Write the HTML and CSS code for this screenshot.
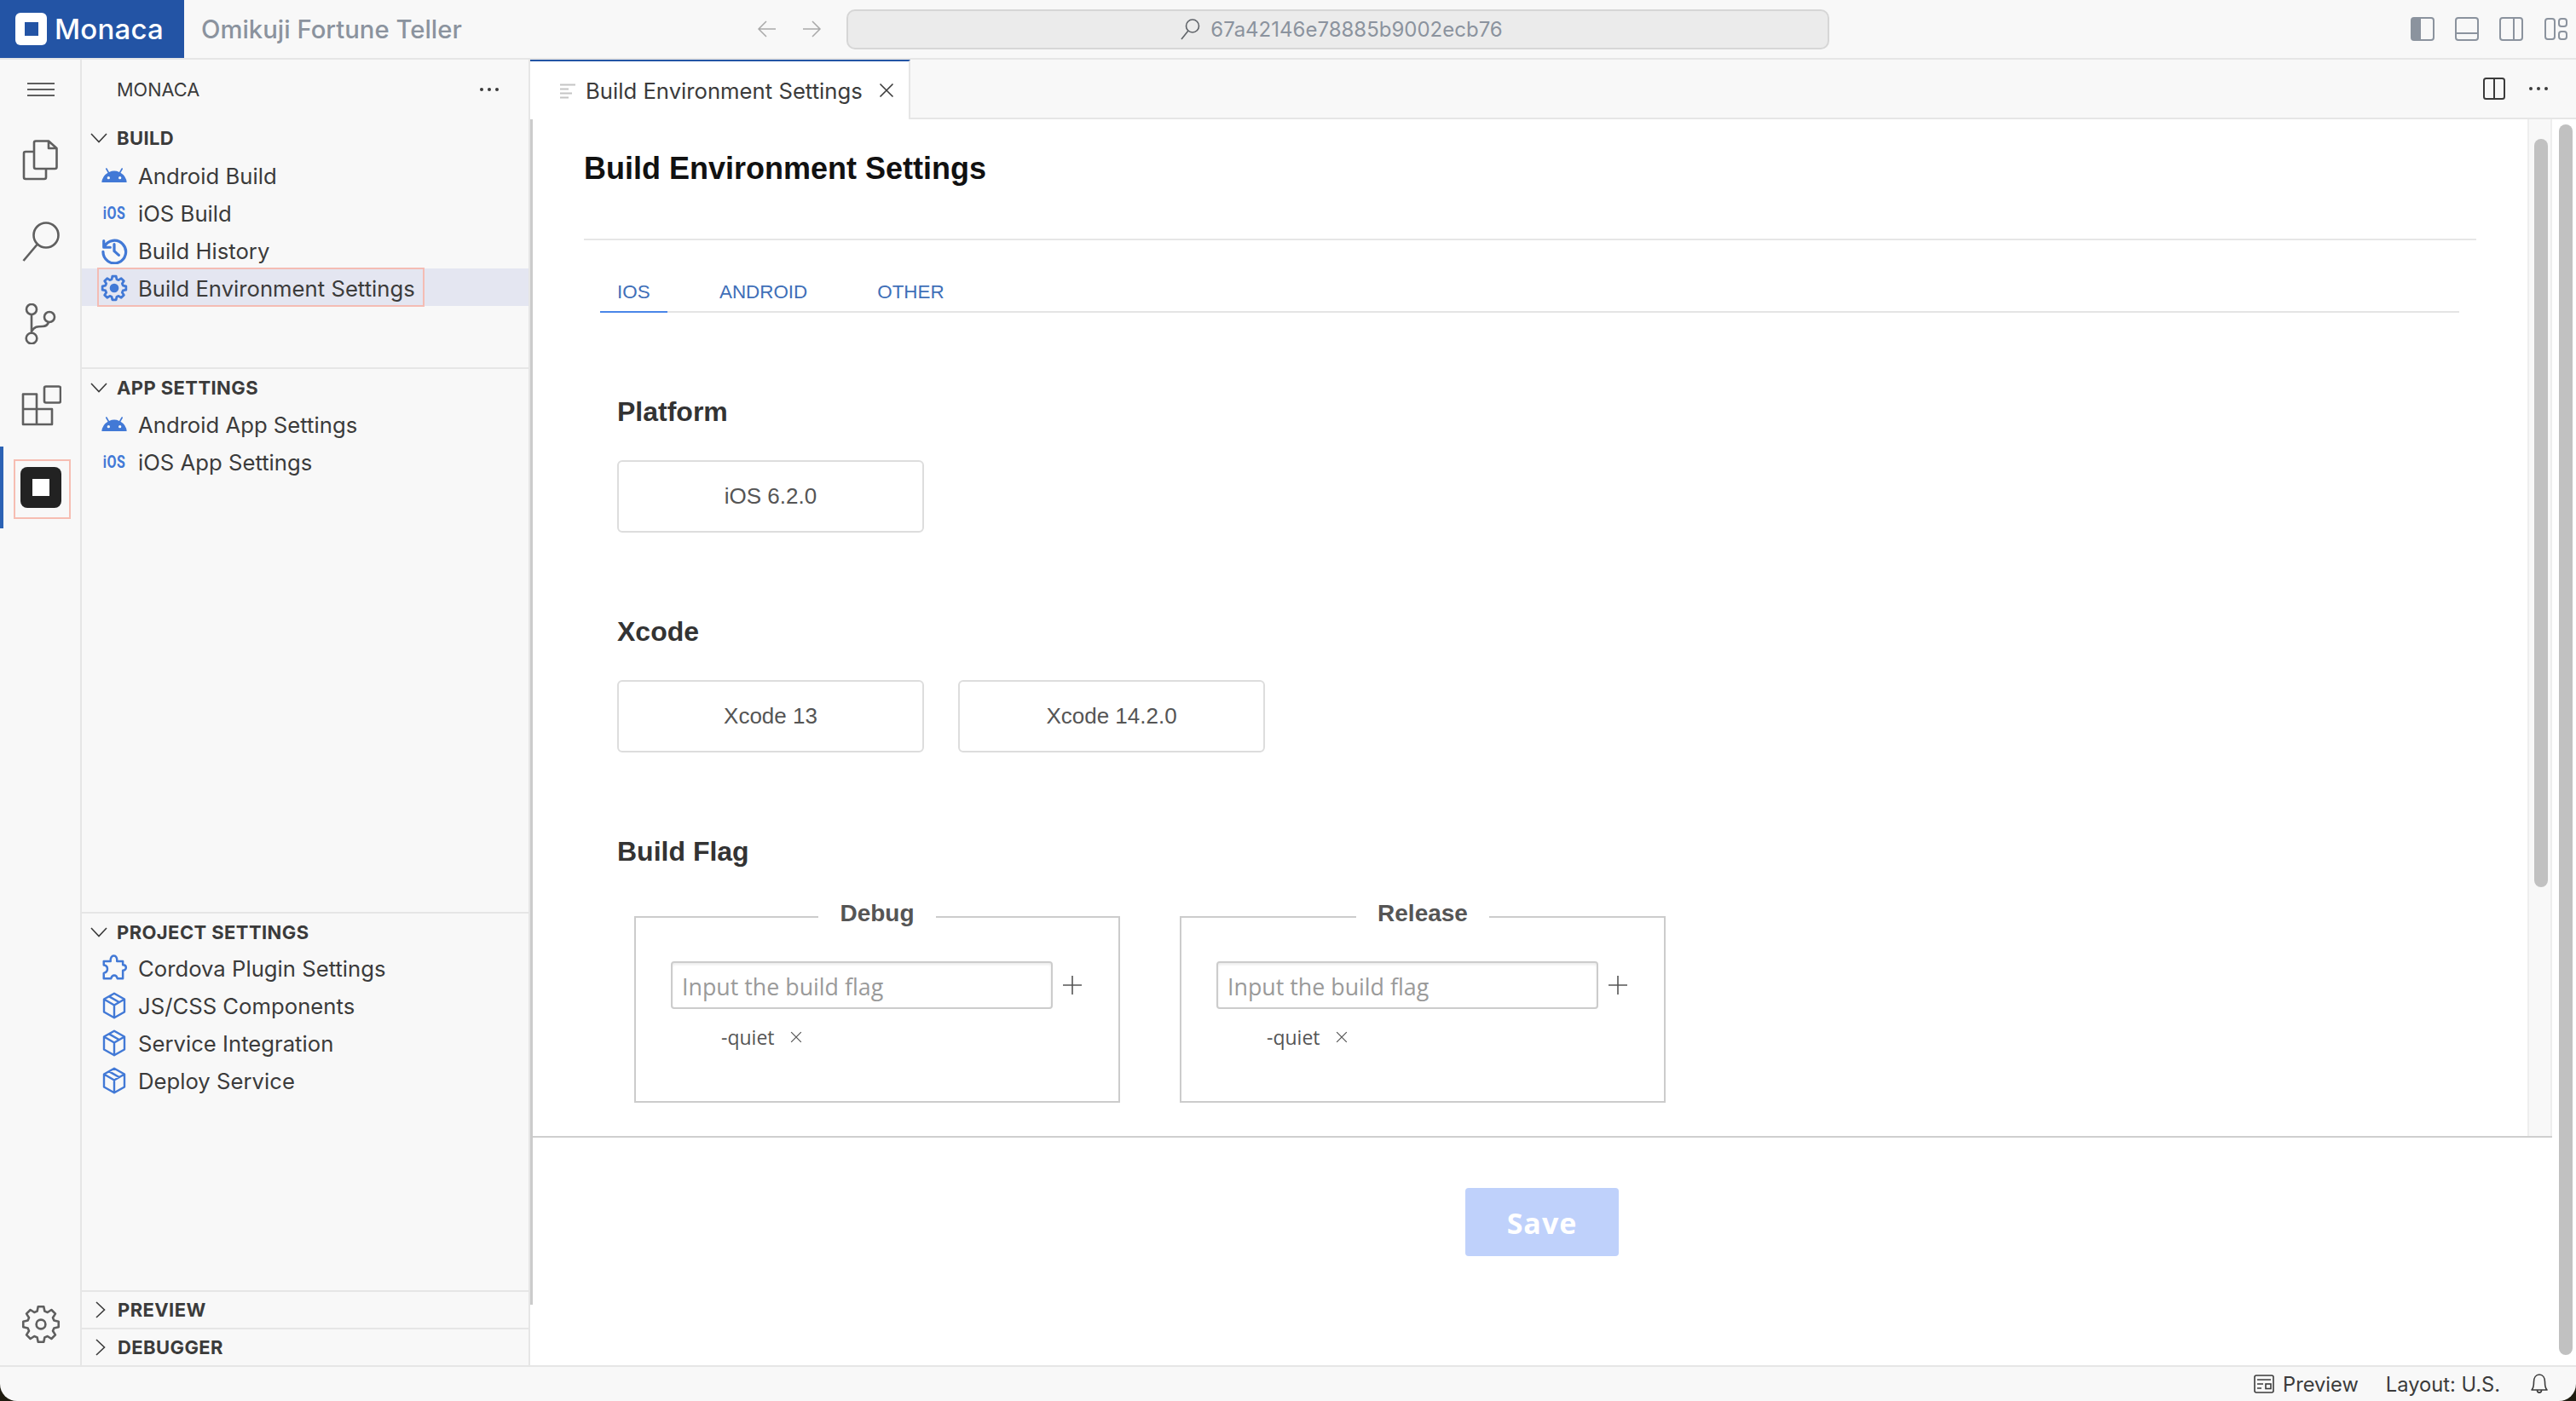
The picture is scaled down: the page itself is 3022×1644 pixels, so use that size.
FILE: index.html
```html
<!DOCTYPE html>
<html lang="en">
<head>
<meta charset="utf-8">
<title>Monaca</title>
<link rel="stylesheet" href="styles.css">
</head>
<body>
<svg class="defs" width="0" height="0" aria-hidden="true">
  <symbol id="i-android" viewBox="0 0 24 24"><path fill="currentColor" d="M17.6 9.48l1.84-3.18c.16-.31.04-.69-.26-.85a.637.637 0 0 0-.83.22l-1.88 3.24a11.463 11.463 0 0 0-8.94 0L5.65 5.67a.643.643 0 0 0-.87-.2c-.28.18-.37.54-.22.83L6.4 9.48A10.78 10.78 0 0 0 1 18h22a10.78 10.78 0 0 0-5.4-8.52zM7 15.25a1.25 1.25 0 1 1 0-2.5 1.25 1.25 0 0 1 0 2.5zm10 0a1.25 1.25 0 1 1 0-2.5 1.25 1.25 0 0 1 0 2.5z"/></symbol>
  <symbol id="i-history" viewBox="0 0 24 24"><path fill="none" stroke="currentColor" stroke-width="2.4" stroke-linecap="round" stroke-linejoin="round" d="M2.8 3.5V9.2H8.5M3.2 8.8A10 10 0 1 1 2.2 13M12 6.5V12.5L16 16"/></symbol>
  <symbol id="i-gear" viewBox="-12 -12 24 24"><polygon fill="none" stroke="currentColor" stroke-linejoin="round" stroke-width="2.1" points="-2.2,-7.69 -1.64,-10.37 1.64,-10.37 2.2,-7.69 3.88,-6.99 6.17,-8.49 8.49,-6.17 6.99,-3.88 7.69,-2.2 10.37,-1.64 10.37,1.64 7.69,2.2 6.99,3.88 8.49,6.17 6.17,8.49 3.88,6.99 2.2,7.69 1.64,10.37 -1.64,10.37 -2.2,7.69 -3.88,6.99 -6.17,8.49 -8.49,6.17 -6.99,3.88 -7.69,2.2 -10.37,1.64 -10.37,-1.64 -7.69,-2.2 -6.99,-3.88 -8.49,-6.17 -6.17,-8.49 -3.88,-6.99"/><circle r="4" fill="currentColor"/></symbol>
  <symbol id="i-gear-line" viewBox="-12 -12 24 24"><polygon fill="none" stroke="currentColor" stroke-linejoin="round" stroke-width="1.3" points="-2.2,-7.69 -1.64,-10.37 1.64,-10.37 2.2,-7.69 3.88,-6.99 6.17,-8.49 8.49,-6.17 6.99,-3.88 7.69,-2.2 10.37,-1.64 10.37,1.64 7.69,2.2 6.99,3.88 8.49,6.17 6.17,8.49 3.88,6.99 2.2,7.69 1.64,10.37 -1.64,10.37 -2.2,7.69 -3.88,6.99 -6.17,8.49 -8.49,6.17 -6.99,3.88 -7.69,2.2 -10.37,1.64 -10.37,-1.64 -7.69,-2.2 -6.99,-3.88 -8.49,-6.17 -6.17,-8.49 -3.88,-6.99"/><circle r="2.7" fill="none" stroke="currentColor" stroke-width="1.3"/></symbol>
  <symbol id="i-puzzle" viewBox="0 0 28 30"><path fill="none" stroke="currentColor" stroke-width="2.3" stroke-linejoin="round" d="M2.5 7.5H10C9.5 3.5 11.5 1.5 13.5 1.5C16 1.5 17.5 4 17 7.5H23.5V11.5C26 11.5 27 13 27 14.5C27 16.2 25.5 17.5 23.5 17.5V26.5H17.5C17 24 15.5 23 14 23C12.5 23 11 24.5 10.5 26.5H2.5V20.5C5 20 6.5 18.5 6.5 16C6.5 13.5 5 12 2.5 11.8Z"/></symbol>
  <symbol id="i-box" viewBox="0 0 24 28"><path fill="none" stroke="currentColor" stroke-width="2.1" stroke-linejoin="round" d="M12 1.5L22.5 7.5V20.5L12 26.5L1.5 20.5V7.5ZM1.5 7.5L12 13.5L22.5 7.5M12 13.5V26.5M6.5 4.5L17 10.5"/></symbol>
  <symbol id="i-chev-d" viewBox="0 0 20 12"><path fill="none" stroke="currentColor" stroke-width="1.6" d="M1 1L10 10.5L19 1"/></symbol>
  <symbol id="i-chev-r" viewBox="0 0 12 20"><path fill="none" stroke="currentColor" stroke-width="1.6" d="M1 1L10.5 10L1 19"/></symbol>
  <symbol id="i-x" viewBox="0 0 18 18"><path fill="none" stroke="currentColor" stroke-width="1.6" d="M1.5 1.5L16.5 16.5M16.5 1.5L1.5 16.5"/></symbol>
  <symbol id="i-plus" viewBox="0 0 22 22"><path fill="none" stroke="currentColor" stroke-width="1.6" d="M11 0V22M0 11H22"/></symbol>
  <symbol id="i-dots" viewBox="0 0 24 6"><circle cx="3" cy="3" r="2" fill="currentColor"/><circle cx="12" cy="3" r="2" fill="currentColor"/><circle cx="21" cy="3" r="2" fill="currentColor"/></symbol>
</svg>

<div class="app">
  <header class="titlebar">
    <div class="brand">
      <svg class="brand-mark" viewBox="0 0 37 38"><rect width="37" height="38" rx="6" fill="#fff"/><rect x="11" y="11" width="16" height="16" fill="#2354a5"/></svg>
      <span class="brand-name">Monaca</span>
    </div>
    <div class="project">Omikuji Fortune Teller</div>
    <div class="nav-arrows">
      <svg class="arrow" viewBox="0 0 24 24"><path fill="none" stroke="currentColor" stroke-width="1.5" d="M22 12H2M11 3L2 12L11 21"/></svg>
      <svg class="arrow" viewBox="0 0 24 24"><path fill="none" stroke="currentColor" stroke-width="1.5" d="M2 12H22M13 3L22 12L13 21"/></svg>
    </div>
    <div class="address">
      <svg class="address-icon" viewBox="0 0 24 26"><circle cx="15" cy="9.5" r="7.5" fill="none" stroke="currentColor" stroke-width="1.6"/><path fill="none" stroke="currentColor" stroke-width="1.6" d="M10 15L2 25"/></svg>
      <span>67a42146e78885b9002ecb76</span>
    </div>
    <div class="layout-icons">
      <svg class="layout-icon" viewBox="0 0 28 28"><rect x="1" y="1" width="26" height="26" rx="3" fill="none" stroke="currentColor" stroke-width="2"/><path fill="currentColor" d="M1 4a3 3 0 0 1 3-3h8v26H4a3 3 0 0 1-3-3z"/></svg>
      <svg class="layout-icon" viewBox="0 0 28 28"><rect x="1" y="1" width="26" height="26" rx="3" fill="none" stroke="currentColor" stroke-width="2"/><path stroke="currentColor" stroke-width="2" d="M1 19H27"/></svg>
      <svg class="layout-icon" viewBox="0 0 28 28"><rect x="1" y="1" width="26" height="26" rx="3" fill="none" stroke="currentColor" stroke-width="2"/><path stroke="currentColor" stroke-width="2" d="M17 1V27"/></svg>
      <svg class="layout-icon" viewBox="0 0 28 28"><rect x="2" y="2" width="11" height="24" rx="3" fill="none" stroke="currentColor" stroke-width="2"/><rect x="18" y="2" width="9" height="9" rx="3" fill="none" stroke="currentColor" stroke-width="2"/><rect x="18" y="17" width="9" height="9" rx="3" fill="none" stroke="currentColor" stroke-width="2"/></svg>
    </div>
  </header>

  <div class="workbench">
    <nav class="activity">
      <div class="act-item act-menu">
        <svg class="act-burger" viewBox="0 0 32 16"><path stroke="currentColor" stroke-width="2" d="M0 1H32M0 8H32M0 15H32"/></svg>
      </div>
      <div class="act-item">
        <svg class="act-icon" viewBox="0 0 48 48"><path fill="none" stroke="currentColor" stroke-width="2.6" stroke-linejoin="round" d="M18 1.5H33L42.5 10V32a2 2 0 0 1-2 2H18a2 2 0 0 1-2-2V3.5a2 2 0 0 1 2-2ZM33 1.5V10H42.5M16 14H6a2 2 0 0 0-2 2V44a2 2 0 0 0 2 2H28a2 2 0 0 0 2-2V34"/></svg>
      </div>
      <div class="act-item">
        <svg class="act-icon" viewBox="0 0 48 48"><circle cx="30" cy="16" r="14.5" fill="none" stroke="currentColor" stroke-width="2.6"/><path fill="none" stroke="currentColor" stroke-width="2.6" d="M19.5 27L3.5 46"/></svg>
      </div>
      <div class="act-item">
        <svg class="act-icon" viewBox="0 0 48 48"><g fill="none" stroke="currentColor" stroke-width="2.6"><circle cx="13" cy="7" r="6"/><circle cx="13" cy="41" r="6.3"/><circle cx="34" cy="16" r="6"/><path d="M13 13V35M13 33C16 27 20 27 26 27C30 27 32 25 33 22"/></g></svg>
      </div>
      <div class="act-item">
        <svg class="act-icon" viewBox="0 0 48 48"><g fill="none" stroke="currentColor" stroke-width="2.6" stroke-linejoin="round"><rect x="28" y="1.5" width="19" height="19" rx="2"/><path d="M3 10.5H19V28H37V46H3ZM3 28H19V46"/></g></svg>
      </div>
      <div class="act-item act-active">
        <svg class="act-icon" viewBox="0 0 48 48"><rect width="48" height="48" rx="8" fill="#222"/><rect x="14" y="14" width="20" height="20" fill="#fff"/></svg>
      </div>
      <div class="act-item act-bottom">
        <svg class="act-icon"><use href="#i-gear-line"/></svg>
      </div>
    </nav>

    <aside class="sidebar">
      <div class="side-head">
        <span class="side-title">MONACA</span>
        <svg class="side-dots"><use href="#i-dots"/></svg>
      </div>
      <section class="pane pane-build">
        <div class="pane-head"><svg class="chev-d"><use href="#i-chev-d"/></svg><span>BUILD</span></div>
        <div class="row"><svg class="ico ico-android"><use href="#i-android"/></svg><span>Android Build</span></div>
        <div class="row"><span class="ico ico-ios">iOS</span><span>iOS Build</span></div>
        <div class="row"><svg class="ico ico-24"><use href="#i-history"/></svg><span>Build History</span></div>
        <div class="row row-selected"><svg class="ico ico-28"><use href="#i-gear"/></svg><span>Build Environment Settings</span></div>
      </section>
      <section class="pane pane-app">
        <div class="pane-head"><svg class="chev-d"><use href="#i-chev-d"/></svg><span>APP SETTINGS</span></div>
        <div class="row"><svg class="ico ico-android"><use href="#i-android"/></svg><span>Android App Settings</span></div>
        <div class="row"><span class="ico ico-ios">iOS</span><span>iOS App Settings</span></div>
      </section>
      <section class="pane pane-project">
        <div class="pane-head"><svg class="chev-d"><use href="#i-chev-d"/></svg><span>PROJECT SETTINGS</span></div>
        <div class="row"><svg class="ico ico-28"><use href="#i-puzzle"/></svg><span>Cordova Plugin Settings</span></div>
        <div class="row"><svg class="ico ico-28"><use href="#i-box"/></svg><span>JS/CSS Components</span></div>
        <div class="row"><svg class="ico ico-28"><use href="#i-box"/></svg><span>Service Integration</span></div>
        <div class="row"><svg class="ico ico-28"><use href="#i-box"/></svg><span>Deploy Service</span></div>
      </section>
      <section class="pane pane-collapsed">
        <div class="pane-head pane-head-flat"><svg class="chev-r"><use href="#i-chev-r"/></svg><span>PREVIEW</span></div>
      </section>
      <section class="pane pane-collapsed">
        <div class="pane-head pane-head-flat"><svg class="chev-r"><use href="#i-chev-r"/></svg><span>DEBUGGER</span></div>
      </section>
    </aside>

    <main class="main">
      <div class="tabbar">
        <div class="tab">
          <svg class="tab-icon" viewBox="0 0 18 18"><path stroke="#c4c4c4" stroke-width="2" d="M0 2H18M0 7H10M0 12H14M0 17H10"/></svg>
          <span>Build Environment Settings</span>
          <svg class="tab-close"><use href="#i-x"/></svg>
        </div>
        <div class="tab-actions">
          <svg class="split-icon" viewBox="0 0 26 26"><rect x="1" y="1" width="24" height="24" rx="2.5" fill="none" stroke="currentColor" stroke-width="2"/><path stroke="currentColor" stroke-width="2" d="M13 1V25"/></svg>
          <svg class="tab-dots"><use href="#i-dots"/></svg>
        </div>
      </div>
      <div class="editor">
        <div class="editor-col">
          <div class="editor-scroll">
            <div class="page">
              <h1 class="page-title">Build Environment Settings</h1>
              <div class="tabs">
                <span class="tabs-item tabs-active">iOS</span>
                <span class="tabs-item">Android</span>
                <span class="tabs-item">Other</span>
              </div>
              <div class="panel">
                <h2 class="heading heading-first">Platform</h2>
                <div class="choices"><div class="choice">iOS 6.2.0</div></div>
                <h2 class="heading">Xcode</h2>
                <div class="choices"><div class="choice">Xcode 13</div><div class="choice">Xcode 14.2.0</div></div>
                <h2 class="heading">Build Flag</h2>
                <div class="flags">
                  <fieldset class="flag-box">
                    <legend>Debug</legend>
                    <div class="flag-input">
                      <input class="text-input" type="text" placeholder="Input the build flag">
                      <svg class="plus"><use href="#i-plus"/></svg>
                    </div>
                    <div class="tag">-quiet<svg class="tag-x"><use href="#i-x"/></svg></div>
                  </fieldset>
                  <fieldset class="flag-box">
                    <legend>Release</legend>
                    <div class="flag-input">
                      <input class="text-input" type="text" placeholder="Input the build flag">
                      <svg class="plus"><use href="#i-plus"/></svg>
                    </div>
                    <div class="tag">-quiet<svg class="tag-x"><use href="#i-x"/></svg></div>
                  </fieldset>
                </div>
              </div>
            </div>
            <div class="inner-track"><div class="inner-thumb"></div></div>
          </div>
          <div class="save-bar"><button class="save" type="button" disabled>Save</button></div>
        </div>
        <div class="outer-track"><div class="outer-thumb"></div></div>
      </div>
    </main>
  </div>

  <footer class="status">
    <svg class="status-preview" viewBox="0 0 24 22"><rect x="1" y="1" width="22" height="20" rx="2" fill="none" stroke="currentColor" stroke-width="1.6"/><path fill="none" stroke="currentColor" stroke-width="1.6" d="M4 6H20M4 11H11M4 16H9"/><rect x="14" y="11" width="6" height="5.5" fill="none" stroke="currentColor" stroke-width="1.6"/></svg>
    <span class="status-text">Preview</span>
    <span class="status-text status-layout">Layout: U.S.</span>
    <svg class="status-bell" viewBox="0 0 20 24"><path fill="none" stroke="currentColor" stroke-width="1.6" stroke-linejoin="round" d="M1 19C3 17 3.5 14 3.5 9.5C3.5 4.5 6 1 10 1C14 1 16.5 4.5 16.5 9.5C16.5 14 17 17 19 19ZM7.5 19.5C7.5 23 12.5 23 12.5 19.5"/></svg>
  </footer>
</div>
</body>
</html>
```

FILE: styles.css
```css
*, *::before, *::after { box-sizing: border-box; }
html { background: #1f1c10; }
body {
  margin: 0;
  width: 3022px;
  height: 1644px;
  overflow: hidden;
  font-family: Inter, "Liberation Sans", sans-serif;
  color: #3b3b3b;
}
.defs { display: block; height: 0; }
.app {
  width: 3022px;
  height: 1644px;
  display: flex;
  flex-direction: column;
  background: #f8f8f8;
  border-radius: 0 0 20px 20px;
  overflow: hidden;
}

/* title bar */
.titlebar {
  flex: 0 0 70px;
  display: flex;
  align-items: center;
  border-bottom: 2px solid #e6e6e6;
  background: #f8f8f8;
}
.brand {
  width: 216px;
  height: 68px;
  background: #2354a5;
  display: flex;
  align-items: center;
  padding-left: 18px;
  gap: 9px;
  color: #fff;
}
.brand-mark { width: 37px; height: 38px; }
.brand-name { font-size: 33px; font-weight: 500; letter-spacing: 0.2px; }
.project {
  width: 672px;
  padding-left: 20px;
  font-size: 29.3px;
  font-weight: 500;
  color: #8b939e;
  white-space: nowrap;
}
.nav-arrows { display: flex; gap: 28px; color: #a9a9a9; width: 105px; }
.arrow { width: 24px; height: 24px; }
.address {
  width: 1153px;
  height: 47px;
  display: flex;
  align-items: center;
  justify-content: center;
  gap: 12px;
  padding-left: 8px;
  background: #ebebeb;
  border: 2px solid #d6d6d6;
  border-radius: 10px;
  font-size: 24px;
  color: #8b939e;
}
.address-icon { width: 24px; height: 26px; color: #5f6368; }
.layout-icons { margin-left: auto; padding-right: 10px; display: flex; gap: 24px; color: #8b939e; }
.layout-icon { width: 28px; height: 28px; }

/* workbench */
.workbench { flex: 1; display: flex; min-height: 0; }
.activity {
  width: 96px;
  flex: none;
  display: flex;
  flex-direction: column;
  border-right: 2px solid #e6e6e6;
  color: #5f5f5f;
}
.act-item {
  position: relative;
  height: 96px;
  display: flex;
  align-items: center;
  justify-content: center;
  padding-left: 2px;
}
.act-menu { height: 70px; }
.act-burger { width: 32px; height: 16px; }
.act-icon { width: 48px; height: 48px; }
.act-active::before {
  content: "";
  position: absolute;
  left: 0;
  top: 0;
  width: 4px;
  height: 96px;
  background: #2c62b4;
}
.act-active::after {
  content: "";
  position: absolute;
  left: 16px;
  top: 15px;
  width: 67px;
  height: 70px;
  border: 2px solid #f6bdb2;
}
.act-bottom { margin-top: auto; height: 96px; }

/* sidebar */
.sidebar {
  width: 526px;
  flex: none;
  display: flex;
  flex-direction: column;
  border-right: 2px solid #e6e6e6;
}
.side-head {
  height: 70px;
  display: flex;
  align-items: center;
  justify-content: space-between;
  padding: 0 34px 0 41px;
}
.side-title { font-size: 21.7px; color: #3b3b3b; }
.side-dots { width: 24px; height: 6px; }
.pane { border-top: 2px solid #e6e6e6; flex: none; }
.pane-build { height: 292px; border-top: 0; }
.pane-app { height: 639px; }
.pane-project { height: 444px; }
.pane-collapsed { height: 44px; }
.pane-head {
  height: 42px;
  display: flex;
  align-items: center;
  padding: 1px 0 0 10px;
  gap: 11px;
  font-size: 22px;
  font-weight: 700;
  letter-spacing: 0.4px;
  color: #3b3b3b;
}
.pane-head-flat { padding-top: 0; }
.pane-build .pane-head { height: 44px; }
.pane-project .row { padding-top: 0; }
.chev-d { width: 20px; height: 12px; }
.chev-r { width: 12px; height: 20px; margin: 0 3px 0 6px; }
.row {
  position: relative;
  height: 44px;
  display: flex;
  align-items: center;
  padding: 2px 0 0 20px;
  gap: 10px;
  font-size: 25.7px;
  color: #3b3b3b;
  white-space: nowrap;
}
.row-selected { background: #e4e6f1; }
.row-selected::after {
  content: "";
  position: absolute;
  left: 18px;
  top: -1px;
  width: 384px;
  height: 46px;
  border: 2px solid #f4bcb4;
}
.ico {
  flex: none;
  width: 36px;
  height: 32px;
  color: #4279d6;
}
.ico-ios {
  display: flex;
  align-items: center;
  justify-content: center;
  font-family: "Roboto", sans-serif;
  font-size: 20px;
  font-weight: 700;
  transform: scaleX(0.8);
  letter-spacing: 0.6px;
}

/* main */
.main { flex: 1; min-width: 0; display: flex; flex-direction: column; }
.tabbar {
  flex: 0 0 70px;
  display: flex;
  align-items: center;
  border-bottom: 2px solid #e6e6e6;
}
.tab {
  width: 446px;
  height: 70px;
  margin-bottom: -2px;
  background: #fff;
  border-top: 2px solid #2354a5;
  border-right: 2px solid #e6e6e6;
  display: flex;
  align-items: center;
  padding-left: 35px;
  gap: 12px;
  font-size: 25.7px;
  white-space: nowrap;
}
.tab-icon { width: 18px; height: 19px; }
.tab-close { width: 18px; height: 18px; margin-left: 7px; }
.tab-actions { margin-left: auto; display: flex; align-items: center; gap: 27px; padding-right: 32px; }
.split-icon { width: 26px; height: 26px; }
.tab-dots { width: 24px; height: 6px; }

.editor { position: relative; flex: 1; min-height: 0; display: flex; background: #fff; }
.editor::before {
  content: "";
  position: absolute;
  left: 0;
  top: 0;
  width: 3px;
  height: 1391px;
  background: #cbcbcb;
  z-index: 1;
}
.editor-col { flex: 1; min-width: 0; display: flex; flex-direction: column; }
.editor-scroll {
  height: 1195px;
  flex: none;
  display: flex;
  overflow: hidden;
  border-bottom: 2px solid #cfcfcf;
}
.page { flex: 1; min-width: 0; padding: 0 60px 0 63px; }
.page-title {
  margin: 0;
  padding: 36px 0 60px;
  font: 700 36px/44px "Liberation Sans", Arial, sans-serif;
  color: #111;
  border-bottom: 2px solid #e6e6e6;
}
.tabs {
  margin: 39px 20px 0 19px;
  display: flex;
  gap: 40px;
  border-bottom: 2px solid #e4e4e4;
}
.tabs-item {
  height: 44px;
  padding: 0 21px;
  margin-bottom: -2px;
  font: 22.4px/44px "Liberation Sans", Arial, sans-serif;
  text-transform: uppercase;
  color: #3f6fb8;
}
.tabs-active { height: 46px; width: 79px; padding: 0 20px; border-bottom: 2px solid #4a86e8; }
.panel { padding-left: 39px; }
.heading {
  margin: 96px 0 37px;
  font: 700 32px/40px "Liberation Sans", Arial, sans-serif;
  color: #333;
}
.choices { display: flex; gap: 40px; }
.choice {
  width: 360px;
  height: 85px;
  display: flex;
  align-items: center;
  justify-content: center;
  border: 2px solid #ddd;
  border-radius: 6px;
  font: 26px "Liberation Sans", Arial, sans-serif;
  color: #555;
}
.flags { display: flex; gap: 70px; margin: -4px 0 0 20px; }
.flag-box {
  width: 570px;
  height: 242px;
  margin: 0;
  padding: 28px 0 0 0;
  border: 2px solid #ccc;
  min-width: 0;
}
.flag-box legend {
  margin: 0 auto;
  padding: 0 25px 8px;
  font: 700 28px/40px "Liberation Sans", Arial, sans-serif;
  color: #555;
}
.flag-input { display: flex; align-items: center; gap: 12px; padding-left: 41px; }
.text-input {
  width: 448px;
  height: 56px;
  padding: 2px 11px 0;
  border: 2px solid #ccc;
  border-radius: 4px;
  background: #fff;
  box-shadow: inset 0 2px 3px rgba(0, 0, 0, 0.08);
  font: 26.8px "Open Sans", sans-serif;
  color: #333;
}
.text-input::placeholder { color: #9a9a9a; opacity: 1; }
.plus { width: 22px; height: 22px; color: #555; }
.tag {
  margin: 17px 0 0 100px;
  height: 32px;
  display: flex;
  align-items: center;
  gap: 18px;
  font: 23px "Open Sans", sans-serif;
  color: #555;
}
.tag-x { width: 14px; height: 14px; color: #555; }
.inner-track {
  width: 29px;
  flex: none;
  padding: 23px 0 0 6px;
  background: #f8f8f8;
  border-left: 2px solid #eee;
  border-right: 2px solid #eee;
}
.inner-thumb { width: 16px; height: 878px; border-radius: 8px; background: #c1c1c1; }
.save-bar { flex: 1; display: flex; justify-content: center; padding: 59px 0 0 2px; }
.save {
  width: 180px;
  height: 80px;
  padding-top: 3px;
  border: 0;
  border-radius: 4px;
  background: #bfd1fb;
  color: #fff;
  font: 700 34px "Open Sans", sans-serif;
  letter-spacing: 1px;
}
.outer-track { width: 28px; flex: none; padding: 6px 0 0 8px; }
.outer-thumb { width: 16px; height: 1444px; border-radius: 8px; background: #c1c1c1; }

/* status bar */
.status {
  flex: 0 0 42px;
  display: flex;
  align-items: center;
  padding-left: 2644px;
  border-top: 2px solid #e6e6e6;
  font-size: 23.7px;
  color: #3b3b3b;
}
.status-preview { width: 24px; height: 22px; }
.status-text { margin-left: 10px; white-space: nowrap; }
.status-layout { margin-left: 32px; }
.status-bell { width: 20px; height: 24px; margin-left: 36px; }
```
